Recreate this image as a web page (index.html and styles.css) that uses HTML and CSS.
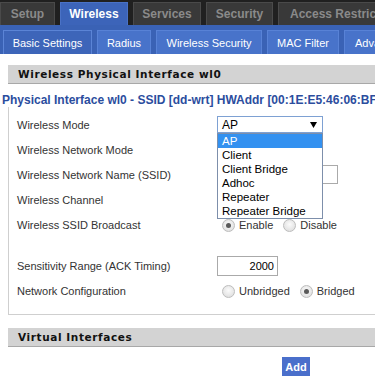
FILE: index.html
```html
<!DOCTYPE html>
<html lang="en">
<head>
  <meta charset="UTF-8" />
  <title>DD-WRT - Basic Settings</title>
  <link rel="stylesheet" href="styles.css">
</head>
<body>
  <div class="topnav">
    <span class="tab w55">Setup</span>
    <span class="tab active w68">Wireless</span>
    <span class="tab w68">Services</span>
    <span class="tab w67">Security</span>
    <span class="tab">Access Restrictions</span>
  </div>
  <div class="subnav">
    <span class="subtab current w89">Basic Settings</span>
    <span class="subtab w54">Radius</span>
    <span class="subtab w106">Wireless Security</span>
    <span class="subtab w72">MAC Filter</span>
    <span class="subtab">Advanced Settings</span>
  </div>

  <div class="content">
    <h2 class="bar">Wireless Physical Interface wl0</h2>
    <div class="legend">Physical Interface wl0 - SSID [dd-wrt] HWAddr [00:1E:E5:46:06:BF]</div>
    <div class="box">
      <div class="row">
        <span class="label">Wireless Mode</span>
        <div class="select open">
          <span>AP</span>
          <svg class="arrow" width="7" height="6" viewBox="0 0 7 6"><path d="M0 0H7L3.5 6Z" fill="#000"/></svg>
          <ul class="options">
            <li class="hl">AP</li>
            <li>Client</li>
            <li>Client Bridge</li>
            <li>Adhoc</li>
            <li>Repeater</li>
            <li>Repeater Bridge</li>
          </ul>
        </div>
      </div>
      <div class="row">
        <span class="label">Wireless Network Mode</span>
        <div class="select small"><span>Mixed</span></div>
      </div>
      <div class="row">
        <span class="label">Wireless Network Name (SSID)</span>
        <input class="text wide" type="text" value="dd-wrt">
      </div>
      <div class="row">
        <span class="label">Wireless Channel</span>
        <div class="select small"><span>Auto</span></div>
      </div>
      <div class="row">
        <span class="label">Wireless SSID Broadcast</span>
        <span class="radio checked"></span><span class="opt">Enable</span>
        <span class="radio"></span><span class="opt">Disable</span>
      </div>
      <div class="spacer"></div>
      <div class="row">
        <span class="label">Sensitivity Range (ACK Timing)</span>
        <input class="text num" type="text" value="2000">
      </div>
      <div class="row">
        <span class="label">Network Configuration</span>
        <span class="radio"></span><span class="opt">Unbridged</span>
        <span class="radio checked"></span><span class="opt">Bridged</span>
      </div>
    </div>

    <h2 class="bar virtual">Virtual Interfaces</h2>
    <div class="actions">
      <button class="add">Add</button>
    </div>
  </div>
</body>
</html>
```

FILE: styles.css
```css
html, body { margin: 0; padding: 0; overflow: hidden; background: #fff; }
body { font-family: "Liberation Sans", Arial, sans-serif; font-size: 11px; color: #333; width: 375px; height: 386px; }

.topnav { display: flex; gap: 5px; height: 25px; padding-top: 2px; box-sizing: border-box; background: #202020; white-space: nowrap; overflow: hidden; }
.tab { flex: none; height: 23px; line-height: 23px; padding: 0 11px; background: #393939; border: 1px solid #4a4a4a; border-bottom: none; box-sizing: border-box; text-align: center; font-size: 12px; font-weight: bold; color: #8a8a8a; }
.tab.active { background: #3c64b9; border-color: #4a72c6; color: #fff; }
.w55 { width: 55px; padding: 0; }
.w68 { width: 68px; padding: 0; }
.w67 { width: 67px; padding: 0; }

.subnav { display: flex; gap: 5px; height: 29px; padding: 5px 0 0 3px; box-sizing: border-box; background: #3a62b5; white-space: nowrap; overflow: hidden; }
.subtab { flex: none; height: 24px; line-height: 24px; padding: 0 10px; background: #4873ca; border: 1px solid #5882d6; border-bottom: none; box-sizing: border-box; text-align: center; color: #fff; }
.subtab.current { background: #3d65b9; border-color: #5b84d6; }
.w89 { width: 89px; padding: 0; }
.w54 { width: 54px; padding: 0; }
.w106 { width: 106px; padding: 0; }
.w72 { width: 72px; padding: 0; }

.content { width: 600px; }
.bar { margin: 11px 0 0 8px; height: 19px; line-height: 18px; padding-left: 10px; background: #d3d3d3; border-bottom: 1px solid #a8a8a8; box-sizing: border-box; font-family: "DejaVu Sans", Verdana, sans-serif; font-size: 10.5px; font-weight: bold; letter-spacing: 0.6px; color: #111; }
.legend { margin-top: 9px; padding-left: 2px; line-height: 14px; font-size: 12px; font-weight: bold; color: #2b4d9e; white-space: nowrap; }

.box { margin-left: 8px; padding: 5px 0 11px 8px; border-left: 1px solid #cfcfcf; border-bottom: 1px solid #cfcfcf; }
.row { display: flex; align-items: center; height: 25px; }
.spacer { height: 16px; }
.label { width: 200px; flex: none; }

.select { position: relative; display: flex; align-items: center; justify-content: space-between; width: 106px; height: 17px; padding: 0 4px 0 4px; box-sizing: border-box; border: 1px solid #aaa; background: #fff; font-size: 12px; color: #000; }
.select.open { border-color: #7ea1d3; z-index: 2; }
.select.small { width: 90px; }
.arrow { margin-right: 1px; }
.options { position: absolute; top: 16px; left: -1px; width: 106px; margin: 0; padding: 0; list-style: none; background: #fff; border: 1px solid #7d8fab; box-sizing: border-box; }
.options li { height: 14px; line-height: 14px; padding-left: 4px; font-size: 11.5px; color: #000; }
.options li.hl { background: #3391f0; color: #fff; }

.text { height: 20px; padding: 0 3px; border: 1px solid #aaa; box-sizing: border-box; font-family: "Liberation Sans", Arial, sans-serif; font-size: 11px; color: #000; }
.text.wide { width: 121px; height: 19px; }
.text.num { width: 61px; text-align: right; }

.radio { width: 11px; height: 11px; margin: 1px 4px 0 5px; border-radius: 50%; border: 1px solid #bdbdbd; background: radial-gradient(circle at 50% 40%, #fbfbfb, #d9d9d9); flex: none; position: relative; }
.radio.checked::after { content: ""; position: absolute; left: 3px; top: 3px; width: 5px; height: 5px; border-radius: 50%; background: #5a5a5a; }
.opt { margin-right: 5px; }

.bar.virtual { margin-top: 13px; }
.actions { padding: 10px 0 0 282px; }
.add { width: 28px; height: 19px; padding: 0; border: none; background: #4a6fcb; color: #fff; font-family: "Liberation Sans Narrow", "Liberation Sans", Arial, sans-serif; font-size: 11px; font-weight: bold; }
```
